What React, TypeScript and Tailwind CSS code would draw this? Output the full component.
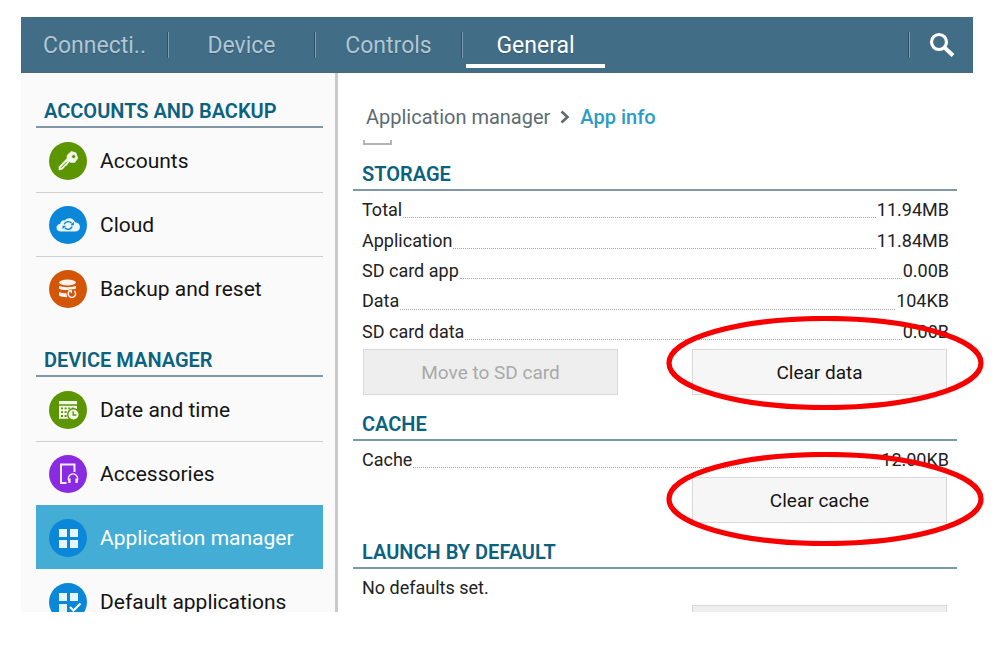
import type { ReactNode } from 'react';

const FONT = "font-['Roboto','Noto_Sans',sans-serif]";

function KeyIcon() {
  return (
    <g>
      <path
        fill="#f2f8ea"
        fillRule="evenodd"
        d="M22.3 9.6 26.8 10.8 28.8 16.3 25.6 20.4 21.2 20.2 20.4 19.8 18.4 21.8 18 23 16.8 23.2 13.6 27 10.2 28 10 24.8 18 16.6 18.2 13.2ZM24.6 12.6a2 2 0 1 0 0 4 2 2 0 0 0 0-4Z"
        stroke="#f2f8ea"
        strokeWidth="0.8"
        strokeLinejoin="round"
      />
      <path d="M12 25.8 18 19.6" stroke="#5b9500" strokeWidth="1" />
    </g>
  );
}

function CloudIcon() {
  return (
    <g>
      <path
        fill="#eaf5fc"
        d="M12 25.5C9.300 25.500 7.500 24 7.500 21.800 7.500 19.600 9 18.200 11.200 18 11.500 15.400 13.600 14 15.800 14.400 17 12.900 18.500 12.200 20.400 12.200 23.300 12.200 25.300 13.900 26 16.300 29 16.500 31 18.500 31 21 31 23.700 29 25.500 26 25.500Z"
      />
      <path
        d="M15.200 18.200A4.400 4.400 0 0 1 22.600 17.200M23.200 20.600A4.400 4.400 0 0 1 15.800 21.800"
        stroke="#0a7fcc"
        strokeWidth="1.400"
        fill="none"
      />
      <path d="M24.800 15.800V19.200H21.400ZM13.600 23.200V19.800H17Z" fill="#0a7fcc" />
    </g>
  );
}

function BackupIcon() {
  return (
    <g>
      <g fill="#fdf3ec">
        <ellipse cx="18.500" cy="12.500" rx="8.500" ry="2.900" />
        <path d="M10 15.800C12.500 17.600 24.500 17.600 27 15.800V18.600C24.500 20 22 19 19 20 15 20.200 11.500 19.800 10 18.800Z" />
        <path d="M10 22C11.500 22.800 14.500 23.300 17.300 23.300L18.300 27.200C14.800 27.200 11.500 26.800 10 25.500Z" />
      </g>
      <path d="M20.400 21A3.700 3.700 0 1 0 25.400 21" stroke="#fdf3ec" strokeWidth="1.500" fill="none" />
      <path d="M19 20h4v3.500Z" fill="#fdf3ec" />
    </g>
  );
}

function DateIcon() {
  return (
    <g>
      <path fill="#f2f8ea" d="M10 10h18v3.200H10ZM10 14.800h18v13H10Z" />
      <path stroke="#5b9500" strokeWidth="1.800" strokeDasharray="2 1.600" d="M12 17.400h14M12 21.200h10M12 25h8" />
      <circle cx="24.500" cy="23.500" r="6.500" fill="#5b9500" />
      <circle cx="24.500" cy="23.500" r="5.100" fill="#f2f8ea" />
      <path d="M24.200 20.200v3.800h3.200" stroke="#5b9500" strokeWidth="1.400" fill="none" />
    </g>
  );
}

function AccessoriesIcon() {
  return (
    <g fill="none" stroke="#f6eefe">
      <path d="M17.500 28H12V9.500H25.500V17" strokeWidth="2" />
      <path d="M20.400 26.500A4.600 4.600 0 1 1 27.600 26.500" strokeWidth="1.500" />
      <path d="M20.500 23.500v4.500M27.500 23.500v4.500" strokeWidth="2.200" />
    </g>
  );
}

function AppsIcon() {
  return <path fill="#e6f4fc" d="M10 10h8v8h-8ZM21 10h8v8h-8ZM10 21h8v8h-8ZM21 21h8v8h-8Z" />;
}

function DefaultAppsIcon() {
  return (
    <g>
      <path fill="#e6f4fc" d="M10 10h8v8h-8ZM21 10h8v8h-8ZM10 21h8v8h-8Z" />
      <path d="M21 24 24.500 27.500 31.500 20.500" stroke="#fff" strokeWidth="2" fill="none" />
    </g>
  );
}

type Item = { label: string; color: string; icon: ReactNode; selected?: boolean };

const accounts: Item[] = [
  { label: 'Accounts', color: '#5b9500', icon: <KeyIcon /> },
  { label: 'Cloud', color: '#0a87d8', icon: <CloudIcon /> },
  { label: 'Backup and reset', color: '#d35608', icon: <BackupIcon /> },
];

const devices: Item[] = [
  { label: 'Date and time', color: '#5b9500', icon: <DateIcon /> },
  { label: 'Accessories', color: '#8a2be2', icon: <AccessoriesIcon /> },
  { label: 'Application manager', color: '#0a87d8', icon: <AppsIcon />, selected: true },
  { label: 'Default applications', color: '#0a87d8', icon: <DefaultAppsIcon /> },
];

function Heading({ children, className = 'h-[46px] px-[9px]' }: { children: ReactNode; className?: string }) {
  return (
    <h2
      className={`flex shrink-0 items-end border-b-2 border-[#8098a6] pb-[3px] text-xl leading-6 font-semibold text-[#0b6280] ${className}`}
    >
      {children}
    </h2>
  );
}

function MenuList({ items }: { items: Item[] }) {
  return (
    <ul className="flex shrink-0 flex-col">
      {items.map((item, i) => {
        const line = i > 0 && !item.selected && !items[i - 1].selected;
        return (
          <li key={item.label}>
            <a
              href="#"
              aria-current={item.selected ? 'page' : undefined}
              className={`flex h-16 items-center gap-[13px] border-t pl-[13px] text-[21px] ${line ? 'border-[#cfcfcf]' : 'border-transparent'} ${item.selected ? 'bg-[#44add5] text-white' : 'text-[#141414]'}`}
            >
              <svg width="38" height="38" viewBox="0 0 38 38" aria-hidden="true" className="shrink-0">
                <circle cx="19" cy="19" r="19" fill={item.color} />
                {item.icon}
              </svg>
              <span className="pt-[3px]">{item.label}</span>
            </a>
          </li>
        );
      })}
    </ul>
  );
}

function Row({ label, value }: { label: string; value: string }) {
  return (
    <div className="flex min-h-[30px] flex-1 items-center">
      <dt>{label}</dt>
      <dd className="flex flex-1 items-center self-stretch">
        <span className="mx-px mb-[7px] flex-1 self-end border-b border-dotted border-[#a8a8a8]" />
        {value}
      </dd>
    </div>
  );
}

function ActionButton({
  children,
  label,
  disabled = false,
}: {
  children?: ReactNode;
  label?: string;
  disabled?: boolean;
}) {
  return (
    <button
      type="button"
      disabled={disabled}
      aria-label={label}
      className="h-[46px] w-[255px] border border-[#d9d9d9] bg-[#f6f6f6] pt-[2px] text-[19px] text-[#141414] disabled:bg-[#eeeeee] disabled:text-[#a9a9a9]"
    >
      {children}
    </button>
  );
}

function Marker({ className }: { className: string }) {
  return (
    <svg
      width="318"
      height="94"
      viewBox="0 0 318 94"
      aria-hidden="true"
      className={`pointer-events-none absolute -left-[26px] ${className}`}
    >
      <ellipse cx="159" cy="47" rx="156" ry="44.500" fill="none" stroke="#f80000" strokeWidth="5.200" />
    </svg>
  );
}

const storage = [
  ['Total', '11.94MB'],
  ['Application', '11.84MB'],
  ['SD card app', '0.00B'],
  ['Data', '104KB'],
  ['SD card data', '0.00B'],
];

const tabs = ['Connecti..', 'Device', 'Controls', 'General'];

export default function App() {
  return (
    <div className={`flex h-screen flex-col bg-white pt-[17px] pr-[33px] pb-[38px] pl-[21px] ${FONT}`}>
      <header className="flex h-14 shrink-0 items-center border-b border-[#4b6a7e] bg-[#426d87] pl-px">
        <nav className="flex h-full items-center">
          {tabs.map((tab) => {
            const active = tab === 'General';
            return (
              <div key={tab} className="relative flex h-full w-[147px] items-center">
                <button
                  type="button"
                  aria-current={active ? 'page' : undefined}
                  className={`flex-1 pt-1 text-[23px] text-shadow-[0_1px_1px_#00000033] ${active ? 'pr-[2px] text-white' : 'text-[#b0c6d3]'}`}
                >
                  {tab}
                </button>
                {active ? (
                  <span className="absolute right-[5px] bottom-1 left-[3px] h-1 bg-white" />
                ) : (
                  <span className="h-[26px] w-[2px] border-r border-l border-r-[#7d9bad] border-l-[#2f5064]" />
                )}
              </div>
            );
          })}
        </nav>
        <span className="ml-auto h-[26px] w-[2px] border-r border-l border-r-[#7d9bad] border-l-[#2f5064]" />
        <button type="button" aria-label="Search" className="flex h-full w-[63px] items-center justify-center">
          <svg width="26" height="26" viewBox="0 0 26 26" fill="none" stroke="#fff" aria-hidden="true">
            <circle cx="10" cy="10" r="7.500" strokeWidth="3.200" />
            <path d="M15.500 15.500 24 23.500" strokeWidth="4" />
          </svg>
        </button>
      </header>

      <div className="flex min-h-0 flex-1">
        <aside className="flex w-[317px] shrink-0 flex-col overflow-hidden border-r-[3px] border-[#cacaca] bg-[#fafafa] pr-3 pl-[15px]">
          <Heading className="h-[55px] px-2">ACCOUNTS AND BACKUP</Heading>
          <MenuList items={accounts} />
          <Heading className="h-[57px] px-2">DEVICE MANAGER</Heading>
          <MenuList items={devices} />
        </aside>

        <main className="flex min-w-0 flex-1 flex-col pr-4 pl-[15px]">
          <nav className="flex h-[67px] shrink-0 items-end gap-[9px] pb-[9px] pl-[13px] text-xl leading-7">
            <a href="#" className="text-[#5d6b73]">
              Application manager
            </a>
            <svg width="12" height="14" viewBox="0 0 12 14" aria-hidden="true" className="mb-[7px]">
              <path d="M2.500 1.500 8.500 7l-6 5.500" fill="none" stroke="#5d6b73" strokeWidth="2.600" />
            </svg>
            <span className="font-medium text-[#2b9cc6]">App info</span>
          </nav>

          <div className="min-h-0 flex-1 overflow-y-clip text-lg text-[#222]">
            <input
              type="checkbox"
              aria-label="Show notifications"
              className="ml-[10px] block h-[5px] w-[29px] appearance-none border-x-2 border-b-2 border-[#b4b4b4]"
            />
            <Heading>STORAGE</Heading>
            <dl className="mt-[4px] flex h-[152px] flex-col pr-2 pl-[9px]">
              {storage.map(([label, value]) => (
                <Row key={label} label={label} value={value} />
              ))}
            </dl>
            <div className="mt-[2px] flex justify-between px-[10px]">
              <ActionButton disabled>Move to SD card</ActionButton>
              <div className="relative flex">
                <ActionButton>Clear data</ActionButton>
                <Marker className="-top-[33px]" />
              </div>
            </div>

            <Heading>CACHE</Heading>
            <dl className="mt-[4px] flex h-[30px] flex-col pr-2 pl-[9px]">
              <Row label="Cache" value="12.00KB" />
            </dl>
            <div className="mt-[2px] flex justify-end px-[10px]">
              <div className="relative flex">
                <ActionButton>Clear cache</ActionButton>
                <Marker className="-top-[25px]" />
              </div>
            </div>

            <Heading>LAUNCH BY DEFAULT</Heading>
            <p className="mt-[4px] flex h-[30px] items-center px-[9px]">No defaults set.</p>
            <div className="mt-[2px] flex justify-end px-[10px]">
              <ActionButton disabled label="Clear defaults" />
            </div>
          </div>
        </main>
      </div>
    </div>
  );
}
